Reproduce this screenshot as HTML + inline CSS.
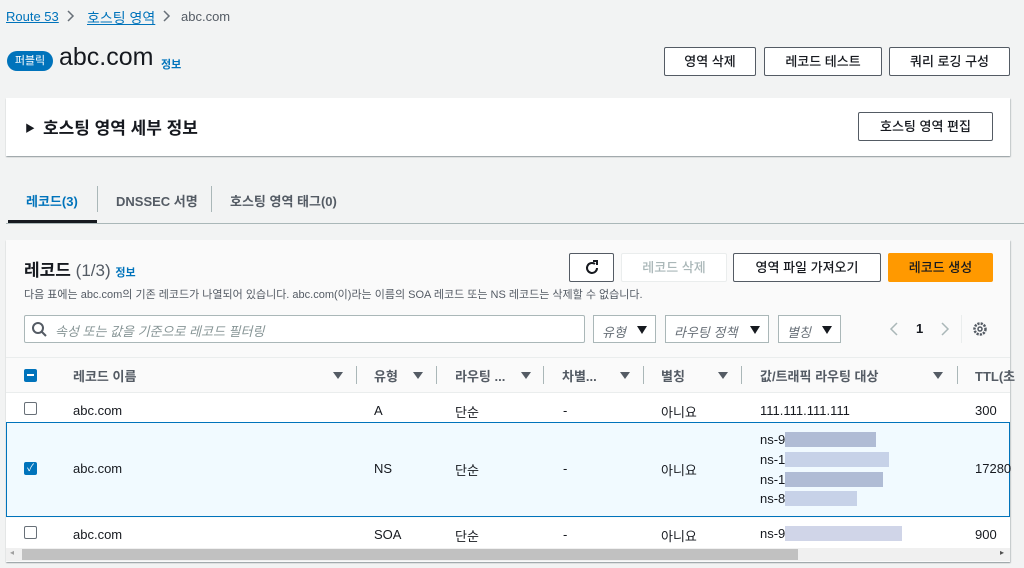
<!DOCTYPE html><html><head><meta charset="utf-8"><style>
*{box-sizing:border-box;margin:0;padding:0}
body{width:1024px;height:568px;overflow:hidden;background:#f2f3f3;font-family:"Liberation Sans","Noto Sans CJK KR",sans-serif;color:#16191f;position:relative;font-size:13px}
.a{position:absolute;white-space:nowrap}
.lnk{color:#0073bb}
.btn{position:absolute;border:1px solid #545b64;background:#fff;border-radius:2px;font-weight:500;font-size:13px;text-align:center;color:#16191f}
.card{position:absolute;background:#fff;box-shadow:0 1px 1px rgba(0,28,36,.3),1px 1px 1px rgba(0,28,36,.15)}
.cb{position:absolute;width:13px;height:13px;border:1px solid #687078;border-radius:2px;background:#fff}
.th{position:absolute;font-size:13px;color:#545b64;font-weight:bold;top:366px}
.tri{position:absolute;top:372px;width:0;height:0;border-left:5px solid transparent;border-right:5px solid transparent;border-top:7px solid #545b64}
.dv{position:absolute;top:366px;width:1px;height:18px;background:#aab7b8}
.td{position:absolute;font-size:13px;color:#16191f}
.sel{position:absolute;border:1px solid #aab7b8;background:#fff;height:28px;top:315px;font-style:italic;color:#687078;font-size:13px;padding:6px 8px}
.sel i{position:absolute;right:8px;top:10px;border-left:5px solid transparent;border-right:5px solid transparent;border-top:8px solid #16191f}
.bl{color:transparent;opacity:.35}
</style></head><body>
<div class="a lnk" style="left:6px;top:9px;font-size:13px;text-decoration:underline">Route 53</div>
<svg class="a" style="left:67px;top:10px" width="8" height="12"><path d="M1 1l5 5-5 5" fill="none" stroke="#687078" stroke-width="1.5"/></svg>
<div class="a lnk" style="left:87px;top:8px;font-size:14px;text-decoration:underline">호스팅 영역</div>
<svg class="a" style="left:163px;top:10px" width="8" height="12"><path d="M1 1l5 5-5 5" fill="none" stroke="#687078" stroke-width="1.5"/></svg>
<div class="a" style="left:181px;top:9px;color:#545b64;font-size:13px">abc.com</div>

<div class="a" style="left:7px;top:51px;width:46px;height:20px;border-radius:10px;background:#0073bb;color:#fff;font-size:11px;text-align:center;line-height:20px">퍼블릭</div>
<div class="a" style="left:59px;top:43px;font-size:25px">abc.com</div>
<div class="a lnk" style="left:161px;top:56px;font-size:11px;font-weight:bold">정보</div>

<div class="btn" style="left:664px;top:47px;width:92px;height:29px;line-height:27px">영역 삭제</div>
<div class="btn" style="left:764px;top:47px;width:118px;height:29px;line-height:27px">레코드 테스트</div>
<div class="btn" style="left:889px;top:47px;width:121px;height:29px;line-height:27px">쿼리 로깅 구성</div>

<div class="card" style="left:6px;top:98px;width:1004px;height:58px"></div>
<div class="a" style="left:25px;top:120px;font-size:10px">▶</div>
<div class="a" style="left:43px;top:114px;font-size:17px;font-weight:bold">호스팅 영역 세부 정보</div>
<div class="btn" style="left:858px;top:112px;width:135px;height:29px;line-height:27px">호스팅 영역 편집</div>

<div class="a lnk" style="left:26px;top:191px;font-weight:bold;font-size:13px">레코드(3)</div>
<div class="a" style="left:8px;top:220px;width:89px;height:3px;background:#16191f"></div>
<div class="a" style="left:97px;top:186px;width:1px;height:26px;background:#aab7b8"></div>
<div class="a" style="left:116px;top:191px;font-weight:bold;color:#545b64">DNSSEC 서명</div>
<div class="a" style="left:211px;top:186px;width:1px;height:26px;background:#aab7b8"></div>
<div class="a" style="left:230px;top:191px;font-weight:bold;color:#545b64">호스팅 영역 태그(0)</div>
<div class="a" style="left:6px;top:223px;width:1018px;height:1px;background:#aab7b8"></div>

<div class="card" style="left:6px;top:240px;width:1004px;height:322px;background:#fafafa"></div>
<div class="a" style="left:24px;top:256px;font-size:17px;font-weight:bold">레코드 <span style="font-weight:normal;color:#545b64">(1/3)</span> <span class="lnk" style="font-size:11px">정보</span></div>
<div class="a" style="left:24px;top:286px;font-size:11px;color:#545b64">다음 표에는 abc.com의 기존 레코드가 나열되어 있습니다. abc.com(이)라는 이름의 SOA 레코드 또는 NS 레코드는 삭제할 수 없습니다.</div>
<div class="btn" style="left:569px;top:253px;width:45px;height:29px"><svg width="18" height="18" viewBox="0 0 18 18" style="margin-top:5px"><path d="M14 9a5 5 0 1 1-2-4" fill="none" stroke="#16191f" stroke-width="2"/><path d="M10 2h4v4" fill="none" stroke="#16191f" stroke-width="2"/></svg></div>
<div class="btn" style="left:621px;top:253px;width:106px;height:29px;line-height:27px;border-color:#eaeded;color:#aab7b8">레코드 삭제</div>
<div class="btn" style="left:733px;top:253px;width:148px;height:29px;line-height:27px">영역 파일 가져오기</div>
<div class="btn" style="left:888px;top:253px;width:105px;height:29px;line-height:27px;background:#ff9900;border-color:#ff9900">레코드 생성</div>

<div class="a" style="left:24px;top:315px;width:561px;height:28px;border:1px solid #aab7b8;background:#fff;border-radius:2px"></div>
<svg class="a" style="left:31px;top:321px" width="16" height="16"><circle cx="7" cy="7" r="5" fill="none" stroke="#545b64" stroke-width="2"/><path d="M11 11l4 4" stroke="#545b64" stroke-width="2"/></svg>
<div class="a" style="left:55px;top:321px;font-style:italic;color:#879596">속성 또는 값을 기준으로 레코드 필터링</div>
<div class="sel" style="left:593px;width:63px">유형<i></i></div>
<div class="sel" style="left:665px;width:104px">라우팅 정책<i></i></div>
<div class="sel" style="left:778px;width:63px">별칭<i></i></div>
<svg class="a" style="left:889px;top:321px" width="10" height="16"><path d="M8 2L2 8l6 6" fill="none" stroke="#aab7b8" stroke-width="1.5"/></svg>
<div class="a" style="left:916px;top:321px;font-weight:bold">1</div>
<svg class="a" style="left:940px;top:321px" width="10" height="16"><path d="M2 2l6 6-6 6" fill="none" stroke="#aab7b8" stroke-width="1.5"/></svg>
<div class="a" style="left:961px;top:315px;width:1px;height:28px;background:#eaeded"></div>
<svg class="a" style="left:972px;top:321px" width="16" height="16"><circle cx="8" cy="8" r="5.5" fill="none" stroke="#545b64" stroke-width="2.5" stroke-dasharray="2.2 1.1"/><circle cx="8" cy="8" r="2" fill="none" stroke="#545b64" stroke-width="1.5"/></svg>

<div class="a" style="left:6px;top:357px;width:1004px;height:1px;background:#eaeded"></div>
<div class="a" style="left:6px;top:392px;width:1004px;height:1px;background:#eaeded"></div>
<div class="a" style="left:24px;top:369px;width:13px;height:13px;background:#0073bb;border-radius:2px"><div style="margin:5px 3px;width:7px;height:2px;background:#fff"></div></div>
<div class="th" style="left:73px">레코드 이름</div><div class="tri" style="left:333px"></div><div class="dv" style="left:356px"></div>
<div class="th" style="left:374px">유형</div><div class="tri" style="left:413px"></div><div class="dv" style="left:436px"></div>
<div class="th" style="left:455px">라우팅 ...</div><div class="tri" style="left:521px"></div><div class="dv" style="left:543px"></div>
<div class="th" style="left:562px">차별...</div><div class="tri" style="left:620px"></div><div class="dv" style="left:643px"></div>
<div class="th" style="left:661px">별칭</div><div class="tri" style="left:718px"></div><div class="dv" style="left:741px"></div>
<div class="th" style="left:760px">값/트래픽 라우팅 대상</div><div class="tri" style="left:933px"></div><div class="dv" style="left:957px"></div>
<div class="th" style="left:975px">TTL(초</div>

<div class="a" style="left:6px;top:393px;width:1004px;height:29px;background:#fff"></div>
<div class="cb" style="left:24px;top:402px"></div>
<div class="td" style="left:73px;top:403px">abc.com</div><div class="td" style="left:374px;top:403px">A</div><div class="td" style="left:455px;top:402px">단순</div><div class="td" style="left:563px;top:403px">-</div><div class="td" style="left:661px;top:402px">아니요</div><div class="td" style="left:760px;top:403px">111.111.111.111</div><div class="td" style="left:975px;top:403px">300</div>

<div class="a" style="left:6px;top:422px;width:1004px;height:95px;background:#f1faff;border:1px solid #0073bb"></div>
<div class="a" style="left:24px;top:462px;width:13px;height:13px;background:#0073bb;border-radius:2px;color:#fff;font-size:10px;line-height:13px;text-align:center">✓</div>
<div class="td" style="left:73px;top:461px">abc.com</div><div class="td" style="left:374px;top:461px">NS</div><div class="td" style="left:455px;top:460px">단순</div><div class="td" style="left:563px;top:461px">-</div><div class="td" style="left:661px;top:460px">아니요</div><div class="td" style="left:975px;top:461px">17280</div>
<div class="td" style="left:760px;top:432px">ns-9<span class="bl" style="background:#3a4a8a">xxxxxxxxxxxxxx</span></div>
<div class="td" style="left:760px;top:452px">ns-1<span class="bl" style="background:#7a8ac0">xxxxxxxxxxxxxxxx</span></div>
<div class="td" style="left:760px;top:472px">ns-1<span class="bl" style="background:#3a4a8a">xxxxxxxxxxxxxxx</span></div>
<div class="td" style="left:760px;top:491px">ns-8<span class="bl" style="background:#7a8ac0">xxxxxxxxxxx</span></div>

<div class="a" style="left:6px;top:518px;width:1004px;height:30px;background:#fff"></div>
<div class="cb" style="left:24px;top:526px"></div>
<div class="td" style="left:73px;top:527px">abc.com</div><div class="td" style="left:374px;top:527px">SOA</div><div class="td" style="left:455px;top:526px">단순</div><div class="td" style="left:563px;top:527px">-</div><div class="td" style="left:661px;top:526px">아니요</div><div class="td" style="left:760px;top:526px">ns-9<span class="bl" style="background:#7a8ac0">xxxxxxxxxxxxxxxxxx</span></div><div class="td" style="left:975px;top:527px">900</div>

<div class="a" style="left:6px;top:548px;width:1004px;height:13px;background:#f0f0f0"></div>
<div class="a" style="left:22px;top:549px;width:776px;height:11px;background:#c1c1c1"></div>
<div class="a" style="left:10px;top:548px;font-size:8px;color:#a0a0a0">◂</div>
<div class="a" style="left:1000px;top:548px;font-size:8px;color:#505050">▸</div>
</body></html>
